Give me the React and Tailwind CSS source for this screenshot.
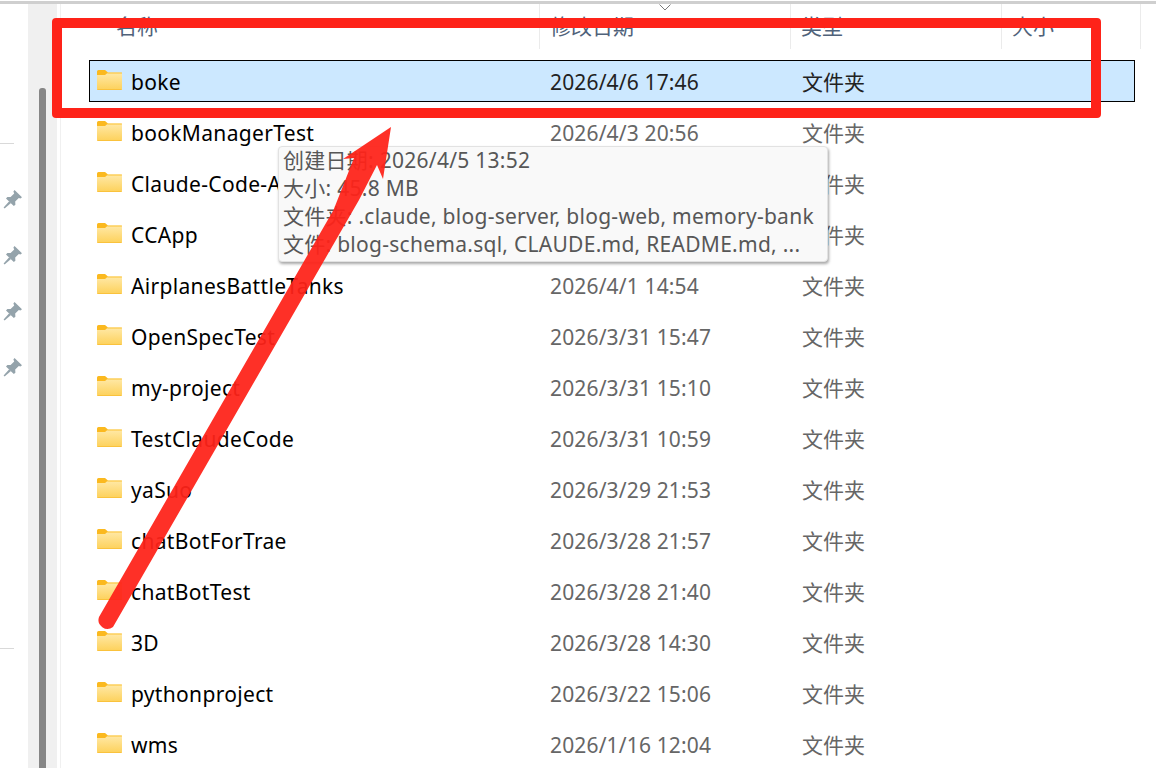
const rows = [
  ["boke", "2026/4/6 17:46"],
  ["bookManagerTest", "2026/4/3 20:56"],
  ["Claude-Code-A", "2026/4/2 10:15"],
  ["CCApp", "2026/4/2 09:32"],
  ["AirplanesBattleTanks", "2026/4/1 14:54"],
  ["OpenSpecTest", "2026/3/31 15:47"],
  ["my-project", "2026/3/31 15:10"],
  ["TestClaudeCode", "2026/3/31 10:59"],
  ["yaSuo", "2026/3/29 21:53"],
  ["chatBotForTrae", "2026/3/28 21:57"],
  ["chatBotTest", "2026/3/28 21:40"],
  ["3D", "2026/3/28 14:30"],
  ["pythonproject", "2026/3/22 15:06"],
  ["wms", "2026/1/16 12:04"],
];

function Folder() {
  return (
    <svg width="25" height="20" viewBox="0 0 25 20" className="mb-[2px] shrink-0">
      <defs>
        <linearGradient id="fg" x1="0" y1="0" x2="0" y2="1">
          <stop offset="0" stopColor="#ffe9a8" />
          <stop offset="1" stopColor="#fdd15a" />
        </linearGradient>
      </defs>
      <path d="M0 1.5 Q0 0 1.5 0 H8 L11 2.5 H11 V6 H0 Z" fill="#fbb91f" />
      <path d="M0 5 L8 5 L11 2.5 H23.5 Q25 2.5 25 4 V18.5 Q25 20 23.5 20 H1.5 Q0 20 0 18.5 Z" fill="url(#fg)" />
      <path d="M0 19 Q0 20 1.5 20 H23.5 Q25 20 25 19 Z" fill="#fac23c" />
      <path d="M11 2.5 H25 V3.5 H10 Z" fill="#fcc235" />
    </svg>
  );
}

function Pin() {
  return (
    <svg width="20" height="20" viewBox="0 0 20 20" className="ml-[3px] block">
      <path d="M11.5 1 L19 8.2 L17.4 9.6 L15.8 9 L12.2 12.6 L12.4 15.8 L10.8 17 L3 9.6 L4.4 8 L7.6 8 L11.2 4.4 L10.4 2.4 Z" fill="#94a3ab" />
      <path d="M6.2 12.2 L8 14 L1.6 19.4 L0.6 18.4 Z" fill="#94a3ab" />
    </svg>
  );
}

function HeaderCell({ w, pl, children, sep }) {
  return (
    <div className={w + " h-[45px] flex items-start shrink-0 " + pl + (sep ? " border-r border-[#ebebeb]" : "")}>
      <span className="text-[21px] leading-[28px] mt-[8px] text-[#50627a]">{children}</span>
    </div>
  );
}

export default function App() {
  return (
    <div className="relative h-[768px] w-full overflow-hidden bg-white font-['Noto_Sans','Noto_Sans_CJK_SC',sans-serif]">
      <div className="mt-px h-[3px] bg-[#cfcfcf]" />
      <div className="flex h-[764px]">
        <div className="w-[28px] shrink-0 pt-[139px]">
          <div className="h-px w-[14px] bg-[#d9d9d9]" />
          <div className="mt-[45px] flex flex-col gap-[36px]">
            <Pin /><Pin /><Pin /><Pin />
          </div>
          <div className="mt-[271px] h-px w-[14px] bg-[#d9d9d9]" />
        </div>
        <div className="w-[29px] shrink-0 bg-[#f0f0f0] pl-[11px] pt-[84px]">
          <div className="h-full w-[7px] rounded-t-[3px] bg-[#868686]" />
        </div>
        <div className="w-[4px] shrink-0 border-r border-[#f0f0f0]" />
        <div className="min-w-0 flex-1">
          <div className="relative flex h-[56px]">
            <HeaderCell w="w-[479px]" pl="pl-[55px]" sep>名称</HeaderCell>
            <HeaderCell w="w-[251px]" pl="pl-[10px]" sep>修改日期</HeaderCell>
            <HeaderCell w="w-[211px]" pl="pl-[10px]" sep>类型</HeaderCell>
            <HeaderCell w="w-[139px]" pl="pl-[10px]" sep>大小</HeaderCell>
            <svg width="12" height="7" viewBox="0 0 12 7" className="absolute left-[598px] top-[0px]">
              <path d="M0.5 0.5 L6 6 L11.5 0.5" fill="none" stroke="#7a7a7a" strokeWidth="1" />
            </svg>
          </div>
          <div className="ml-[28px] mr-[21px] flex flex-col gap-[9px]">
            {rows.map(([name, date], i) => {
              const sel = i === 0;
              return (
                <div
                  key={name}
                  className={
                    "flex h-[42px] shrink-0 items-center border text-[21px] " +
                    (sel ? "border-black bg-[#cce8ff]" : "border-transparent")
                  }
                >
                  <div className="ml-[7px] flex w-[453px] shrink-0 items-center gap-[9px]">
                    <Folder />
                    <span className="pt-[4px] tracking-[0.33px] text-black">{name}</span>
                  </div>
                  <span className={"w-[252px] shrink-0 pt-[4px] tracking-[0.15px] " + (sel ? "text-[#222]" : "text-[#666]")}>{date}</span>
                  <span className={"pt-[4px] " + (sel ? "text-[#222]" : "text-[#666]")}>文件夹</span>
                </div>
              );
            })}
          </div>
        </div>
      </div>

      <div className="absolute left-[278px] top-[146px] h-[116px] w-[550px] rounded-[4px] border border-[#e2e2e2] bg-[#f9f9f9] pl-[4px] text-[21px] leading-[28px] tracking-[0.27px] text-[#575757] whitespace-nowrap shadow-[1px_2px_3px_rgba(0,0,0,0.35)]">
        <div className="-mt-px">创建日期: 2026/4/5 13:52</div>
        <div>大小: 45.8 MB</div>
        <div>文件夹: .claude, blog-server, blog-web, memory-bank</div>
        <div>文件: blog-schema.sql, CLAUDE.md, README.md, ...</div>
      </div>

      <div className="absolute left-[52px] top-[18px] h-[100px] w-[1049px] rounded-[4px] border-[10px] border-[#fe2319]" />

      <svg className="absolute left-0 top-0" width="1156" height="768" viewBox="0 0 1156 768">
        <path
          d="M391 127 L343 159 L354 158 L333.5 210 L99 617 A9 9 0 0 0 113 627 L359 200 L377 165 L383 179 Z"
          fill="#fe2319"
          fillOpacity="0.94"
        />
      </svg>
    </div>
  );
}
